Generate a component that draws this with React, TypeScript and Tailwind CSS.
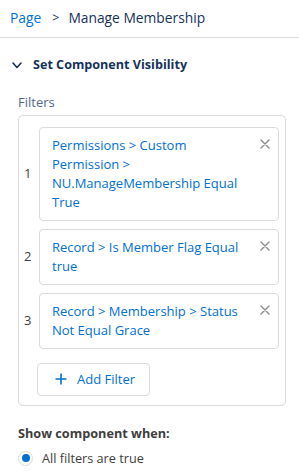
import React from "react";

const font = { fontFamily: '"Open Sans", "Noto Sans", sans-serif' };

function XIcon() {
  return (
    <svg width="10" height="10" viewBox="0 0 10 10" className="shrink-0">
      <path d="M1 1 L9 9 M9 1 L1 9" stroke="#8c8c8c" strokeWidth="1.4" strokeLinecap="round" />
    </svg>
  );
}

function FilterRow({ n, lines }: { n: number; lines: string }) {
  return (
    <div className="flex items-center">
      <div className="w-[15px] shrink-0 text-[13px] text-[#3e3e3c]">{n}</div>
      <div className="flex flex-1 items-start rounded-[4px] border border-[#dddbda] bg-white pl-[12px] pr-[8px] py-[8px]">
        <div className="flex-1 text-[13px] leading-[19px] text-[#0070d2] pr-[14px]">{lines}</div>
        <div className="pt-[3px]">
          <XIcon />
        </div>
      </div>
    </div>
  );
}

export default function App() {
  return (
    <div className="w-[299px] h-[471px] overflow-hidden bg-white" style={font}>
      <div className="flex h-[38px] items-center border-b border-[#dddbda] pl-[10px] text-[13.8px] text-[#16325c]">
        <span className="text-[#0070d2]">Page</span>
        <span className="ml-[11px] mr-[9px] text-[12.5px]">&gt;</span>
        <span>Manage Membership</span>
      </div>
      <div className="flex items-center pl-[12px] pt-[18px] pb-[18px]">
        <svg width="10" height="7" viewBox="0 0 10 7">
          <path d="M1 1 L5 5.5 L9 1" fill="none" stroke="#16325c" strokeWidth="1.6" strokeLinecap="round" strokeLinejoin="round" />
        </svg>
        <span className="ml-[11px] text-[12.6px] font-bold text-[#16325c]">Set Component Visibility</span>
      </div>
      <div className="pl-[18px] pr-[13px]">
        <div className="text-[13px] leading-[19px] text-[#54698d]">Filters</div>
        <div className="mt-[3px] rounded-[5px] border border-[#dddbda] pl-[5px] pr-[6px] pt-[11px] pb-[9px]">
          <div className="flex flex-col gap-[8px]">
            <FilterRow n={1} lines="Permissions > Custom Permission > NU.ManageMembership Equal True" />
            <FilterRow n={2} lines="Record > Is Member Flag Equal true" />
            <FilterRow n={3} lines="Record > Membership > Status Not Equal Grace" />
          </div>
          <div className="mt-[14px] ml-[13px] flex h-[33px] w-[113px] items-center rounded-[4px] border border-[#dddbda] pl-[17px] text-[13px] text-[#0070d2]">
            <svg width="12" height="12" viewBox="0 0 12 12">
              <path d="M6 0.5 V11.5 M0.5 6 H11.5" stroke="#0070d2" strokeWidth="1.6" />
            </svg>
            <span className="ml-[10px]">Add Filter</span>
          </div>
        </div>
        <div className="mt-[18px] text-[12.7px] font-bold text-[#3e3e3c]">Show component when:</div>
        <div className="mt-[6px] flex items-center">
          <div className="flex h-[15px] w-[15px] items-center justify-center rounded-full border border-[#dddbda] bg-white">
            <div className="h-[8px] w-[8px] rounded-full bg-[#0070d2]" />
          </div>
          <span className="ml-[9px] text-[12.7px] text-[#3e3e3c]">All filters are true</span>
        </div>
        <div className="mt-[5px] flex items-center">
          <div className="h-[15px] w-[15px] rounded-full border border-[#dddbda] bg-white" />
        </div>
      </div>
    </div>
  );
}
